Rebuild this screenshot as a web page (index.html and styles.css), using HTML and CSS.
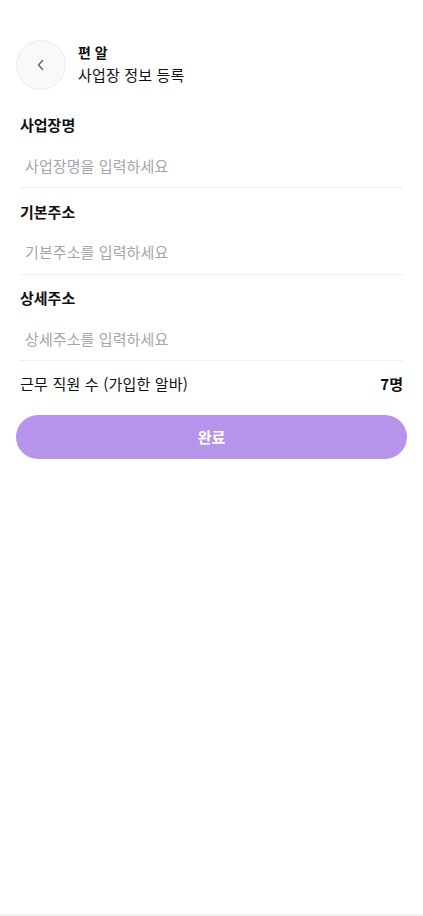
FILE: index.html
```html
<!DOCTYPE html>
<html lang="ko">
<head>
<meta charset="utf-8">
<meta name="viewport" content="width=device-width, initial-scale=1">
<title>사업장 정보 등록</title>
<link rel="stylesheet" href="styles.css">
</head>
<body>
<div class="page">
  <header class="header">
    <button class="back" type="button" aria-label="뒤로">
      <svg width="14" height="14" viewBox="0 0 14 14" fill="none"><path d="M8.5 2.5 L4.5 7 L8.5 11.5" stroke="#5a5a60" stroke-width="1.2" stroke-linecap="round" stroke-linejoin="round"/></svg>
    </button>
    <div class="titles">
      <div class="brand">편 알</div>
      <div class="subtitle">사업장 정보 등록</div>
    </div>
  </header>
  <main class="form">
    <div class="field">
      <label class="label">사업장명</label>
      <input class="input" type="text" placeholder="사업장명을 입력하세요">
    </div>
    <div class="field">
      <label class="label">기본주소</label>
      <input class="input" type="text" placeholder="기본주소를 입력하세요">
    </div>
    <div class="field">
      <label class="label">상세주소</label>
      <input class="input" type="text" placeholder="상세주소를 입력하세요">
    </div>
    <div class="count-row">
      <span class="count-label">근무 직원 수 (가입한 알바)</span>
      <span class="count-value">7명</span>
    </div>
  </main>
  <div class="actions">
    <button class="submit" type="button">완료</button>
  </div>
  <div class="bottom-line"></div>
</div>
</body>
</html>
```

FILE: styles.css
```css
* { box-sizing: border-box; }
html, body { margin: 0; padding: 0; background: #fff; }
body {
  font-family: "Noto Sans CJK KR", "Noto Sans", sans-serif;
  color: #111;
}
.page {
  min-height: 100vh;
  display: flex;
  flex-direction: column;
  padding: 40px 16px 0;
}
.header {
  display: flex;
  align-items: flex-start;
  gap: 12px;
  height: 50px;
}
.back {
  width: 50px;
  height: 50px;
  border-radius: 50%;
  border: 1px solid #ececef;
  background: #f9f9fb;
  display: flex;
  align-items: center;
  justify-content: center;
  padding: 0;
  flex: none;
}
.titles {
  display: flex;
  flex-direction: column;
  padding-top: 1px;
}
.brand {
  font-size: 14px;
  font-weight: 700;
  line-height: 22px;
}
.subtitle {
  font-size: 15px;
  line-height: 23px;
  letter-spacing: 0.15px;
  color: #111;
}
.form {
  padding: 24px 4px 0;
  display: flex;
  flex-direction: column;
}
.field {
  display: flex;
  flex-direction: column;
  gap: 8px;
  margin-bottom: 12.5px;
}
.label {
  font-size: 15px;
  font-weight: 700;
  line-height: 22px;
  color: #111;
}
.input {
  height: 44px;
  border: none;
  border-bottom: 1px solid #f0f0f2;
  padding: 0 0 1px 5px;
  font-family: inherit;
  font-size: 15px;
  letter-spacing: 0.1px;
  color: #111;
  background: transparent;
  outline: none;
}
.input::placeholder { color: #a3a6ad; }
.count-row {
  display: flex;
  justify-content: space-between;
  align-items: center;
  height: 44px;
  margin-top: -12px;
}
.count-label {
  font-size: 15px;
  letter-spacing: 0.2px;
  color: #111;
}
.count-value {
  font-size: 15px;
  font-weight: 700;
  color: #111;
}
.actions {
  padding-top: 9px;
}
.submit {
  width: 100%;
  height: 44px;
  border: none;
  border-radius: 22px;
  background: #b794ec;
  color: #fff;
  font-family: inherit;
  font-size: 15px;
  font-weight: 700;
}
.bottom-line {
  margin: auto -16px 0;
  height: 2px;
  background: #f2f2f3;
}
```
